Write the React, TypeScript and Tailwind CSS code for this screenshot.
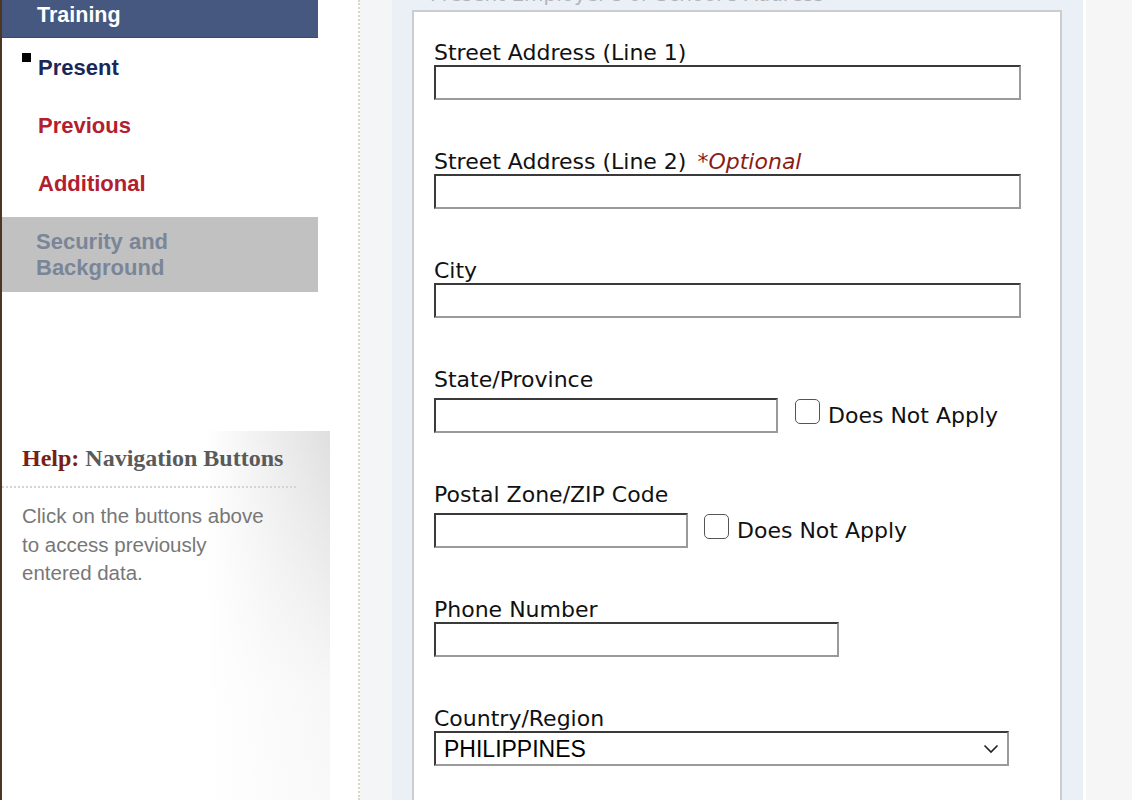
const navItems = [
  { label: "Present", color: "text-[#1b2758]", current: true },
  { label: "Previous", color: "text-[#b2202f]", current: false },
  { label: "Additional", color: "text-[#b2202f]", current: false },
]

const inputCls =
  "h-[35px] border-2 border-t-[#3a3a3a] border-l-[#3a3a3a] border-b-[#9a9a9a] border-r-[#9a9a9a] bg-white"

function Label({ children }: { children: React.ReactNode }) {
  return <div className="h-[24px] whitespace-nowrap text-[22px] leading-[24px] text-[#111]">{children}</div>
}

function Checkbox() {
  return (
    <label className="ml-[17px] flex items-start">
      <span className="mt-[1px] block h-[25px] w-[25px] rounded-[5px] border-[1.5px] border-[#555] bg-white" />
      <span className="ml-[8px] mt-[5px] text-[22px] leading-[25px] text-[#111]">Does Not Apply</span>
    </label>
  )
}

function Field({ label, width }: { label: React.ReactNode; width: string }) {
  return (
    <div className="mb-[50px]">
      <Label>{label}</Label>
      <div className={`${inputCls} ${width}`} />
    </div>
  )
}

function FieldWithCheck({ label, width, gap }: { label: string; width: string; gap: string }) {
  return (
    <div className="mb-[50px]">
      <Label>{label}</Label>
      <div className="mt-[6px] flex items-start">
        <div className={`${inputCls} ${width}`} />
        <div className={gap}>
          <Checkbox />
        </div>
      </div>
    </div>
  )
}

export default function App() {
  return (
    <div className="flex h-[800px] w-[1132px] overflow-hidden bg-white font-['Liberation_Sans',Arial,sans-serif]">
      <div className="w-[2px] shrink-0 bg-[#4b3621]" />

      {/* left navigation */}
      <div className="flex w-[356px] shrink-0 flex-col bg-white">
        <nav className="w-[316px]">
          <div className="flex h-[38px] items-end border-b border-[#3b4b70] bg-[#46587f] pb-[11px] pl-[35px] text-[21.5px] font-bold leading-[22px] text-white">
            Training
          </div>
          {navItems.map((item) => (
            <div key={item.label} className="relative flex h-[58px] items-center pl-[36px]">
              {item.current && <span className="absolute left-[20px] top-[15px] h-[9px] w-[9px] bg-black" />}
              <span className={`text-[22px] font-bold ${item.color}`}>{item.label}</span>
            </div>
          ))}
          <div className="mt-[5px] flex h-[75px] items-center bg-[#c1c1c1] pl-[34px] text-[22px] font-bold leading-[26px] text-[#7a8698]">
            Security and
            <br />
            Background
          </div>
        </nav>

        <div className="mt-[139px] w-[328px] flex-1 bg-[linear-gradient(to_bottom,rgba(255,255,255,0)_0%,rgba(255,255,255,0.75)_70%,rgba(255,255,255,0.8)_100%),linear-gradient(to_right,#ffffff_62%,#dfdfdf_100%)] pt-[13px]">
          <div className="pl-[20px] font-['Liberation_Serif','Times_New_Roman',serif] text-[24px] font-bold leading-[28px] text-[#5a5a5a]">
            <span className="text-[#7a1f14]">Help:</span> Navigation Buttons
          </div>
          <div className="mt-[14px] w-[294px] border-t-2 border-dotted border-[#d4d4d4]" />
          <p className="w-[270px] pl-[20px] pt-[14px] text-[20.5px] leading-[28.7px] text-[#777]">
            Click on the buttons above to access previously entered data.
          </p>
        </div>
      </div>

      <div className="w-0 shrink-0 border-l-2 border-dotted border-[#dcd6c0]" />
      <div className="w-[32px] shrink-0 bg-[#f4f5f7]" />

      {/* form panel */}
      <div className="flex w-[691px] shrink-0 flex-col bg-[#ebf0f7] pl-[20px] pr-[21px] font-['DejaVu_Sans',Verdana,sans-serif]">
        <div className="h-[10px] shrink-0 overflow-hidden pl-[18px]">
          <div className="-mt-[16px] whitespace-nowrap text-[20px] leading-[20px] text-[#b0b4ba]">
            Present Employer's or School's Address
          </div>
        </div>
        <div className="h-[840px] shrink-0 border-2 border-[#cbcdd1] bg-white pl-[20px] pt-[29px]">
          <Field label="Street Address (Line 1)" width="w-[587px]" />
          <Field
            label={
              <>
                Street Address (Line 2) <span className="ml-[4px] italic text-[#8a1c17]">*Optional</span>
              </>
            }
            width="w-[587px]"
          />
          <Field label="City" width="w-[587px]" />
          <FieldWithCheck label="State/Province" width="w-[344px]" gap="" />
          <FieldWithCheck label="Postal Zone/ZIP Code" width="w-[254px]" gap="-ml-[1px]" />
          <Field label="Phone Number" width="w-[405px]" />
          <div>
            <Label>Country/Region</Label>
            <div className={`${inputCls} flex w-[575px] items-center justify-between pl-[8px] pr-[8px]`}>
              <span className="font-['Liberation_Sans',Arial,sans-serif] text-[23px] leading-[26px] text-black">
                PHILIPPINES
              </span>
              <svg width="16" height="10" viewBox="0 0 16 10" fill="none">
                <path d="M1.5 1.5 L8 8 L14.5 1.5" stroke="#222" strokeWidth="1.6" />
              </svg>
            </div>
          </div>
        </div>
      </div>

      <div className="flex-1 border-l-[3px] border-white bg-[#f6f6f6]" />
    </div>
  )
}
